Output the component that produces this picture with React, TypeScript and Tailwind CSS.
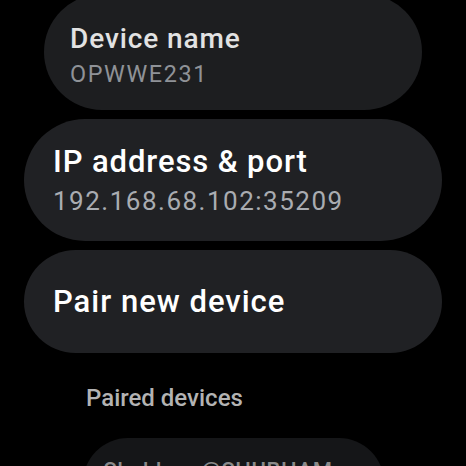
const font = { fontFamily: 'Roboto, "Noto Sans", sans-serif' }

export default function App() {
  return (
    <div className="w-[466px] h-[466px] overflow-hidden bg-black" style={font}>
      <div className="flex flex-col items-center">
        {/* Device name (scaled down, top edge of list) */}
        <div className="mt-[-6px] w-[378px] h-[116px] rounded-full bg-[#1d1e20] pl-[26px] pt-[28px] flex flex-col">
          <div className="text-[28px] leading-[34px] font-medium text-[#e2e2e2] tracking-[0.9px]">Device name</div>
          <div className="text-[23.4px] leading-[36.6px] text-[#8f9297] tracking-[1.6px]">OPWWE231</div>
        </div>

        {/* IP address */}
        <div className="mt-[9px] w-[418px] h-[122px] rounded-full bg-[#202124] pl-[29px] pt-[24px] flex flex-col">
          <div className="text-[31px] leading-[38px] font-medium text-white tracking-[0.9px]">IP address &amp; port</div>
          <div className="text-[26px] leading-[40px] text-[#a9acb1] tracking-[1.5px]">192.168.68.102:35209</div>
        </div>

        {/* Pair new device */}
        <div className="mt-[9px] w-[418px] h-[103px] rounded-full bg-[#202124] pl-[29px] flex items-center">
          <div className="text-[31px] leading-[38px] font-medium text-white tracking-[1px]">Pair new device</div>
        </div>

        <div className="self-stretch pl-[86px] mt-[30px] mb-[25px] text-[24px] leading-[30px] font-medium text-[#b3b3b3]">
          Paired devices
        </div>

        <div className="w-[301px] h-[90px] rounded-full bg-[#151618] pl-[21px] pt-[18px]">
          <div className="text-[22px] leading-[30px] font-medium text-[#8a8a8a] tracking-[0.6px]">Shubham@SHUBHAM</div>
        </div>
      </div>
    </div>
  )
}
